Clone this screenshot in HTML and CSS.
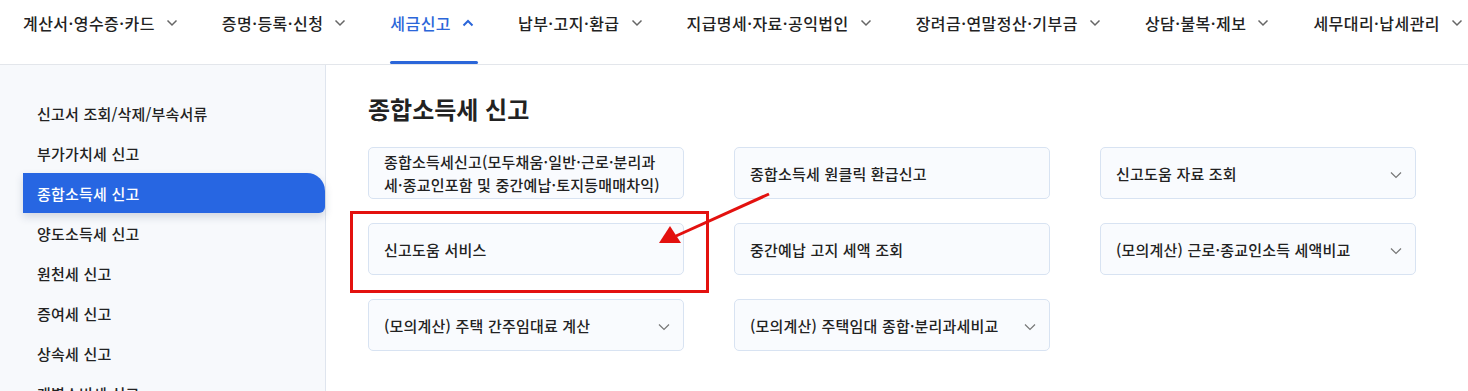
FILE: index.html
```html
<!DOCTYPE html>
<html lang="ko">
<head>
<meta charset="utf-8">
<link rel="stylesheet" href="styles.css">
</head>
<body>
<header class="gnb">
  <nav class="gnb-list">
    <a class="gnb-item">계산서·영수증·카드<svg class="chev" viewBox="0 0 12 8"><path d="M1.5 1.5 6 6l4.5-4.5"/></svg></a>
    <a class="gnb-item">증명·등록·신청<svg class="chev" viewBox="0 0 12 8"><path d="M1.5 1.5 6 6l4.5-4.5"/></svg></a>
    <a class="gnb-item active">세금신고<svg class="chev" viewBox="0 0 12 8"><path d="M1.5 6.5 6 2l4.5 4.5"/></svg></a>
    <a class="gnb-item">납부·고지·환급<svg class="chev" viewBox="0 0 12 8"><path d="M1.5 1.5 6 6l4.5-4.5"/></svg></a>
    <a class="gnb-item">지급명세·자료·공익법인<svg class="chev" viewBox="0 0 12 8"><path d="M1.5 1.5 6 6l4.5-4.5"/></svg></a>
    <a class="gnb-item">장려금·연말정산·기부금<svg class="chev" viewBox="0 0 12 8"><path d="M1.5 1.5 6 6l4.5-4.5"/></svg></a>
    <a class="gnb-item">상담·불복·제보<svg class="chev" viewBox="0 0 12 8"><path d="M1.5 1.5 6 6l4.5-4.5"/></svg></a>
    <a class="gnb-item">세무대리·납세관리<svg class="chev" viewBox="0 0 12 8"><path d="M1.5 1.5 6 6l4.5-4.5"/></svg></a>
  </nav>
</header>
<div class="body-wrap">
  <aside class="side">
    <ul class="side-list">
      <li class="side-item">신고서 조회/삭제/부속서류</li>
      <li class="side-item">부가가치세 신고</li>
      <li class="side-item active">종합소득세 신고</li>
      <li class="side-item">양도소득세 신고</li>
      <li class="side-item">원천세 신고</li>
      <li class="side-item">증여세 신고</li>
      <li class="side-item">상속세 신고</li>
      <li class="side-item">개별소비세 신고</li>
    </ul>
  </aside>
  <main class="main">
    <h1 class="title">종합소득세 신고</h1>
    <div class="cards">
      <div class="card"><span class="card-text">종합소득세신고(모두채움·일반·근로·분리과세·종교인포함 및 중간예납·토지등매매차익)</span></div>
      <div class="card"><span class="card-text">종합소득세 원클릭 환급신고</span></div>
      <div class="card"><span class="card-text">신고도움 자료 조회</span><svg class="card-chev" viewBox="0 0 12 8"><path d="M1 1.5 6 6.5l5-5"/></svg></div>
      <div class="card"><span class="card-text">신고도움 서비스</span></div>
      <div class="card"><span class="card-text">중간예납 고지 세액 조회</span></div>
      <div class="card"><span class="card-text">(모의계산) 근로·종교인소득 세액비교</span><svg class="card-chev" viewBox="0 0 12 8"><path d="M1 1.5 6 6.5l5-5"/></svg></div>
      <div class="card"><span class="card-text">(모의계산) 주택 간주임대료 계산</span><svg class="card-chev" viewBox="0 0 12 8"><path d="M1 1.5 6 6.5l5-5"/></svg></div>
      <div class="card"><span class="card-text">(모의계산) 주택임대 종합·분리과세비교</span><svg class="card-chev" viewBox="0 0 12 8"><path d="M1 1.5 6 6.5l5-5"/></svg></div>
    </div>
  </main>
</div>
<svg class="annot" width="1468" height="391" viewBox="0 0 1468 391">
  <rect x="351.5" y="212.5" width="356" height="79" fill="none" stroke="#e3110f" stroke-width="3"/>
  <line x1="769" y1="194" x2="676" y2="236" stroke="#e3110f" stroke-width="3"/>
  <polygon points="659,243 670,226 681,243" fill="#e3110f"/>
</svg>
</body>
</html>
```
FILE: styles.css
```css
* { box-sizing: border-box; margin: 0; padding: 0; }
html, body { width: 1468px; height: 391px; overflow: hidden; }
body {
  font-family: "Noto Sans CJK KR", "Noto Sans", sans-serif;
  color: #222;
  background: #fff;
  position: relative;
}
.gnb {
  height: 65px;
  border-bottom: 1px solid #e3e6eb;
  background: #fff;
}
.gnb-list {
  display: flex;
  height: 64px;
  padding-left: 23px;
  gap: 44px;
}
.gnb-item {
  display: flex;
  align-items: center;
  height: 64px;
  padding-bottom: 19px;
  font-size: 16px;
  font-weight: 500;
  color: #222;
  letter-spacing: 0.45px;
  white-space: nowrap;
  position: relative;
}
.gnb-item .chev {
  width: 12px;
  height: 8px;
  margin-left: 11px;
  fill: none;
  stroke: #666;
  stroke-width: 1.5;
}
.gnb-item.active { color: #2b66d9; }
.gnb-item.active .chev { stroke: #2b66d9; stroke-width: 2; }
.gnb-item.active::after {
  content: "";
  position: absolute;
  left: 0;
  right: -4px;
  bottom: 0;
  height: 3px;
  border-radius: 2px;
  background: #2b66d9;
}
.body-wrap {
  display: flex;
  height: 326px;
}
.side {
  width: 326px;
  flex: none;
  background: #f7f9fc;
  border-right: 1px solid #dfe5ee;
  padding-top: 28px;
}
.side-list { list-style: none; margin-left: 23px; }
.side-item {
  height: 40px;
  display: flex;
  align-items: center;
  padding-left: 14px;
  font-size: 15px;
  font-weight: 500;
  color: #222;
  letter-spacing: 0.2px;
}
.side-item.active {
  background: #2766e2;
  color: #fff;
  border-radius: 0 18px 6px 0;
  box-shadow: 0 4px 8px rgba(40, 60, 100, 0.18);
}
.main {
  flex: 1;
  padding: 28px 0 0 42px;
}
.title {
  font-size: 24px;
  font-weight: 700;
  line-height: 32px;
  color: #222;
  letter-spacing: 0;
  margin-bottom: 22px;
}
.cards {
  display: grid;
  grid-template-columns: repeat(3, 316px);
  grid-auto-rows: 52px;
  column-gap: 50px;
  row-gap: 24px;
}
.card {
  display: flex;
  align-items: center;
  justify-content: space-between;
  border: 1px solid #d8e3f2;
  border-radius: 5px;
  background: #f9fbfe;
  padding: 0 13px 0 15px;
}
.card-text {
  font-size: 15px;
  font-weight: 500;
  line-height: 23px;
  color: #222;
  letter-spacing: 0.2px;
  max-width: 276px;
}
.card-chev {
  width: 12px;
  height: 8px;
  flex: none;
  fill: none;
  stroke: #777;
  stroke-width: 1.2;
  margin-top: 4px;
}
.annot {
  position: absolute;
  left: 0;
  top: 0;
  pointer-events: none;
}
```
